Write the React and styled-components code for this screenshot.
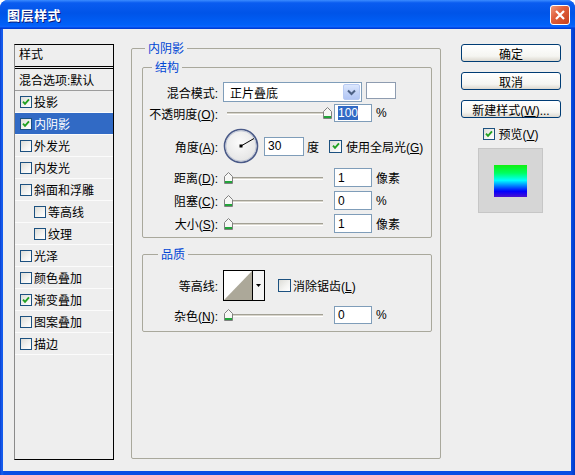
import React from "react";
import styled, { createGlobalStyle } from "styled-components";

const GlobalStyle = createGlobalStyle`
  html, body {
    margin: 0;
    padding: 0;
    background: #ffffff;
  }
  body {
    font-family: "Liberation Sans", "Noto Sans CJK SC", sans-serif;
    font-size: 12px;
    color: #000;
  }
`;

const Window = styled.div`
  width: 575px;
  height: 475px;
  box-sizing: border-box;
  display: flex;
  flex-direction: column;
  background: linear-gradient(90deg, #0b3fd0 0, #1660f0 2px, #0a4ee4 4px, #0a4ee4 571px, #0038c8 575px);
  border-radius: 8px 8px 0 0;
  overflow: hidden;
`;

const TitleBar = styled.div`
  height: 29px;
  flex-shrink: 0;
  display: flex;
  align-items: center;
  justify-content: space-between;
  padding: 0 5px 0 7px;
  background: linear-gradient(180deg, #3b8cff 0%, #0a5cf0 10%, #0054e8 45%, #0060f8 85%, #0a64ff 92%, #003dd7 97%, #003dd7 100%);
`;

const Title = styled.span`
  color: #fff;
  font-family: "Noto Sans CJK SC", sans-serif;
  font-weight: bold;
  font-size: 13px;
  letter-spacing: 0.5px;
  text-shadow: 1px 1px 0 #0a1a78;
`;

const CloseButton = styled.div`
  width: 20px;
  height: 20px;
  box-sizing: border-box;
  border: 1px solid #fff;
  border-radius: 3px;
  background: linear-gradient(135deg, #f09a7c 0%, #e0603c 40%, #c8401c 100%);
  display: flex;
  align-items: center;
  justify-content: center;
  margin-top: 1px;
`;

const Body = styled.div`
  flex: 1;
  margin: 0 4px 4px 3px;
  background: #eeeeee;
  display: flex;
  align-items: flex-start;
  padding: 12px 10px 0 11px;
`;

/* ---------- left style list ---------- */

const StyleList = styled.div`
  width: 100px;
  height: 416px;
  margin-top: 3px;
  margin-right: 17px;
  flex-shrink: 0;
  box-sizing: border-box;
  border: 1px solid #000;
  border-left-color: #8a8a8a;
`;

const ListHeader = styled.div`
  height: 21px;
  line-height: 21px;
  padding-left: 4px;
  border-bottom: 3px double #000;
`;

const ListRow = styled.div`
  height: 22px;
  box-sizing: border-box;
  display: flex;
  align-items: center;
  gap: 2px;
  white-space: nowrap;
  padding-left: ${(p) => (p.$plain ? 4 : p.$indent ? 19 : 5)}px;
  border-bottom: 1px solid ${(p) => (p.$dark ? "#9c9c9c" : "#fbfbfb")};
  background: ${(p) => (p.$selected ? "#316ac5" : "transparent")};
  color: ${(p) => (p.$selected ? "#fff" : "#000")};
`;

/* ---------- checkbox ---------- */

const Box = styled.span`
  width: ${(p) => p.$size}px;
  height: ${(p) => p.$size}px;
  box-sizing: border-box;
  flex-shrink: 0;
  border: 1px solid #1c5180;
  background: linear-gradient(135deg, #dcdcd7 0%, #f4f4f2 60%, #ffffff 100%);
  display: inline-flex;
  align-items: center;
  justify-content: center;
`;

const Check = ({ checked, size = 13 }) => (
  <Box $size={size}>
    {checked && (
      <svg width="8" height="8" viewBox="0 0 8 8">
        <polyline points="1,3.6 3,5.8 7,1.4" fill="none" stroke="#21a121" strokeWidth="1.9" />
      </svg>
    )}
  </Box>
);

const CheckLabel = styled.span`
  display: inline-flex;
  align-items: center;
  gap: ${(p) => p.$gap || 3}px;
  margin-left: ${(p) => p.$ml || 0}px;
  margin-top: ${(p) => p.$mt || 0}px;
  white-space: nowrap;
`;

/* ---------- group boxes ---------- */

const Group = styled.fieldset`
  margin: ${(p) => p.$mt || 0}px 0 0 0;
  min-width: 0;
  box-sizing: border-box;
  border: 1px solid #a9a89c;
  border-radius: 2px;
  padding: ${(p) => p.$pad};
  height: ${(p) => (p.$h ? `${p.$h}px` : "auto")};
`;

const Legend = styled.legend`
  color: #0046d5;
  line-height: 14px;
  padding: 0 3px;
  margin-left: ${(p) => p.$ml}px;
  font-family: "Noto Sans CJK SC", sans-serif;
`;

const Main = styled(Group)`
  flex: 1;
  width: 310px;
  flex-shrink: 0;
  margin-right: 20px;
`;

const FieldRow = styled.div`
  display: flex;
  align-items: center;
  height: ${(p) => p.$h}px;
  margin-top: ${(p) => p.$mt || 0}px;
`;

const FieldLabel = styled.span`
  width: 75px;
  flex-shrink: 0;
  text-align: right;
  margin-right: 5px;
  white-space: nowrap;
`;

const Select = styled.div`
  width: 139px;
  height: 20px;
  box-sizing: border-box;
  border: 1px solid #7f9db9;
  background: #fff;
  display: flex;
  align-items: center;
  justify-content: space-between;
  padding: 0 1px 0 6px;
`;

const SelectArrow = styled.div`
  width: 17px;
  height: 16px;
  box-sizing: border-box;
  border: 1px solid #b9cbf3;
  border-radius: 2px;
  background: linear-gradient(180deg, #dde8fe 0%, #c4d4f7 50%, #b2c6f5 100%);
  display: flex;
  align-items: center;
  justify-content: center;
`;

const Swatch = styled.div`
  width: 30px;
  height: 17px;
  box-sizing: border-box;
  margin-left: 4px;
  margin-top: -3px;
  border: 1px solid #8e9cb0;
  background: #fff;
`;

const Field = styled.div`
  width: ${(p) => p.$w || 38}px;
  height: ${(p) => p.$h || 19}px;
  box-sizing: border-box;
  flex-shrink: 0;
  margin-left: ${(p) => p.$ml || 3}px;
  border: 1px solid #7f9db9;
  background: #fff;
  padding-left: 3px;
  display: flex;
  align-items: center;
`;

const Selected = styled.span`
  background: #316ac5;
  color: #fff;
`;

const Unit = styled.span`
  margin-left: ${(p) => p.$ml || 4}px;
  white-space: nowrap;
`;

const SliderTrack = styled.div`
  position: relative;
  width: 108px;
  height: 14px;
  flex-shrink: 0;

  &::before {
    content: "";
    position: absolute;
    left: 4px;
    right: 8px;
    top: 6px;
    height: 1px;
    background: #d8d5cc;
    border-top: 1px solid #a3a195;
    border-bottom: 1px solid #ffffff;
  }
`;

const ThumbIcon = styled.svg`
  position: absolute;
  top: 1px;
`;

const Slider = ({ value }) => (
  <SliderTrack>
    <ThumbIcon width="9" height="12" viewBox="0 0 9 12" style={{ left: 1 + value * 0.99 }}>
      <path d="M0.5 4.5 L4.5 0.5 L8.5 4.5 V11.5 H0.5 Z" fill="#f7f7f5" stroke="#808080" />
      <rect x="1" y="9" width="7" height="2" fill="#22a43a" />
    </ThumbIcon>
  </SliderTrack>
);

const Dial = () => (
  <svg width="36" height="36" viewBox="0 0 36 36" style={{ flexShrink: 0 }}>
    <defs>
      <radialGradient id="dialFill" cx="45%" cy="40%" r="60%">
        <stop offset="0%" stopColor="#fbfbfb" />
        <stop offset="100%" stopColor="#e4e4e4" />
      </radialGradient>
    </defs>
    <circle cx="18" cy="18" r="16.5" fill="url(#dialFill)" stroke="#4a5a88" strokeWidth="1.6" />
    <circle cx="18" cy="18" r="15.2" fill="none" stroke="#b8bfd2" strokeWidth="0.8" />
    <line x1="18" y1="18" x2="31" y2="10.5" stroke="#000" strokeWidth="1" />
    <rect x="16.5" y="16.5" width="3" height="3" fill="#000" />
  </svg>
);

const Contour = styled.div`
  width: 42px;
  height: 31px;
  box-sizing: border-box;
  border: 1px solid #000;
  display: flex;
  background: #fff;
`;

const ContourArrow = styled.div`
  flex: 1;
  border-left: 1px solid #000;
  display: flex;
  align-items: center;
  justify-content: center;
  background: #f4f4f4;
`;

/* ---------- right column ---------- */

const SideColumn = styled.div`
  width: 100px;
  flex-shrink: 0;
  display: flex;
  flex-direction: column;
  align-items: center;
  padding-top: 3px;
`;

const Button = styled.div`
  width: 100px;
  height: 18px;
  box-sizing: border-box;
  border: 1px solid #003c74;
  border-radius: 3px;
  background: linear-gradient(180deg, #ffffff 0%, #f5f5f1 70%, #dcd8cf 100%);
  display: flex;
  align-items: center;
  justify-content: center;
  margin-bottom: 10px;
  white-space: nowrap;
`;

const PreviewBox = styled.div`
  width: 65px;
  height: 65px;
  box-sizing: border-box;
  margin: 6px 2px 0 0;
  border: 1px solid #c6c6c6;
  background: #d6d6d6;
  display: flex;
  align-items: center;
  justify-content: center;
`;

const GradientSample = styled.div`
  width: 33px;
  height: 32px;
  background: linear-gradient(180deg, #10f010 0%, #00ff60 25%, #00ffff 48%, #0080ff 65%, #0000ff 82%, #4a10d0 100%);
`;

const styleItems = [
  { label: "投影", checked: true },
  { label: "内阴影", checked: true, selected: true },
  { label: "外发光" },
  { label: "内发光" },
  { label: "斜面和浮雕" },
  { label: "等高线", indent: true },
  { label: "纹理", indent: true },
  { label: "光泽" },
  { label: "颜色叠加" },
  { label: "渐变叠加", checked: true },
  { label: "图案叠加" },
  { label: "描边" },
];

const App = () => {
  return (
    <>
      <GlobalStyle />
      <Window>
        <TitleBar>
          <Title>图层样式</Title>
          <CloseButton>
            <svg width="12" height="12" viewBox="0 0 12 12">
              <path d="M2 2 L10 10 M10 2 L2 10" stroke="#fff" strokeWidth="2.2" />
            </svg>
          </CloseButton>
        </TitleBar>

        <Body>
          <StyleList>
            <ListHeader>样式</ListHeader>
            <ListRow $plain $dark>混合选项:默认</ListRow>
            {styleItems.map((item) => (
              <ListRow key={item.label} $indent={item.indent} $selected={item.selected}>
                <Check checked={item.checked} size={12} />
                <span>{item.label}</span>
              </ListRow>
            ))}
          </StyleList>

          <Main $pad="5px 8px 0 10px" $h={418}>
            <Legend $ml={3}>内阴影</Legend>

            <Group $pad="8px 6px 4px 0">
              <Legend $ml={9}>结构</Legend>
              <FieldRow $h={20}>
                <FieldLabel>混合模式:</FieldLabel>
                <Select>
                  正片叠底
                  <SelectArrow>
                    <svg width="9" height="7" viewBox="0 0 9 7">
                      <polyline points="1,1.5 4.5,5 8,1.5" fill="none" stroke="#4d6185" strokeWidth="2" />
                    </svg>
                  </SelectArrow>
                </Select>
                <Swatch />
              </FieldRow>
              <FieldRow $h={18} $mt={2}>
                <FieldLabel>
                  不透明度(<u>O</u>):
                </FieldLabel>
                <Slider value={100} />
                <Field $h={18}>
                  <Selected>100</Selected>
                </Field>
                <Unit>%</Unit>
              </FieldRow>
              <FieldRow $h={36} $mt={6}>
                <FieldLabel>
                  角度(<u>A</u>):
                </FieldLabel>
                <Dial />
                <Field $w={40} $ml={5}>30</Field>
                <Unit $ml={3}>度</Unit>
                <CheckLabel $ml={10} $gap={4}>
                  <Check checked />
                  <span>
                    使用全局光(<u>G</u>)
                  </span>
                </CheckLabel>
              </FieldRow>
              <FieldRow $h={19} $mt={4}>
                <FieldLabel>
                  距离(<u>D</u>):
                </FieldLabel>
                <Slider value={0} />
                <Field>1</Field>
                <Unit>像素</Unit>
              </FieldRow>
              <FieldRow $h={19} $mt={4}>
                <FieldLabel>
                  阻塞(<u>C</u>):
                </FieldLabel>
                <Slider value={0} />
                <Field>0</Field>
                <Unit>%</Unit>
              </FieldRow>
              <FieldRow $h={19} $mt={4}>
                <FieldLabel>
                  大小(<u>S</u>):
                </FieldLabel>
                <Slider value={0} />
                <Field>1</Field>
                <Unit>像素</Unit>
              </FieldRow>
            </Group>

            <Group $mt={9} $pad="9px 6px 7px 0">
              <Legend $ml={15}>品质</Legend>
              <FieldRow $h={31}>
                <FieldLabel>等高线:</FieldLabel>
                <Contour>
                  <svg width="28" height="29" viewBox="0 0 28 29">
                    <polygon points="0,29 28,0 28,29" fill="#aca899" />
                  </svg>
                  <ContourArrow>
                    <svg width="5" height="3" viewBox="0 0 5 3">
                      <polygon points="0,0 5,0 2.5,3" fill="#000" />
                    </svg>
                  </ContourArrow>
                </Contour>
                <CheckLabel $ml={13} $gap={2}>
                  <Check />
                  <span>
                    消除锯齿(<u>L</u>)
                  </span>
                </CheckLabel>
              </FieldRow>
              <FieldRow $h={18} $mt={5}>
                <FieldLabel>
                  杂色(<u>N</u>):
                </FieldLabel>
                <Slider value={0} />
                <Field $h={18}>0</Field>
                <Unit>%</Unit>
              </FieldRow>
            </Group>
          </Main>

          <SideColumn>
            <Button>确定</Button>
            <Button>取消</Button>
            <Button>
              <span>
                新建样式(<u>W</u>)...
              </span>
            </Button>
            <CheckLabel $gap={3} $mt={-3}>
              <Check checked size={12} />
              <span>
                预览(<u>V</u>)
              </span>
            </CheckLabel>
            <PreviewBox>
              <GradientSample />
            </PreviewBox>
          </SideColumn>
        </Body>
      </Window>
    </>
  );
};

export default App;
